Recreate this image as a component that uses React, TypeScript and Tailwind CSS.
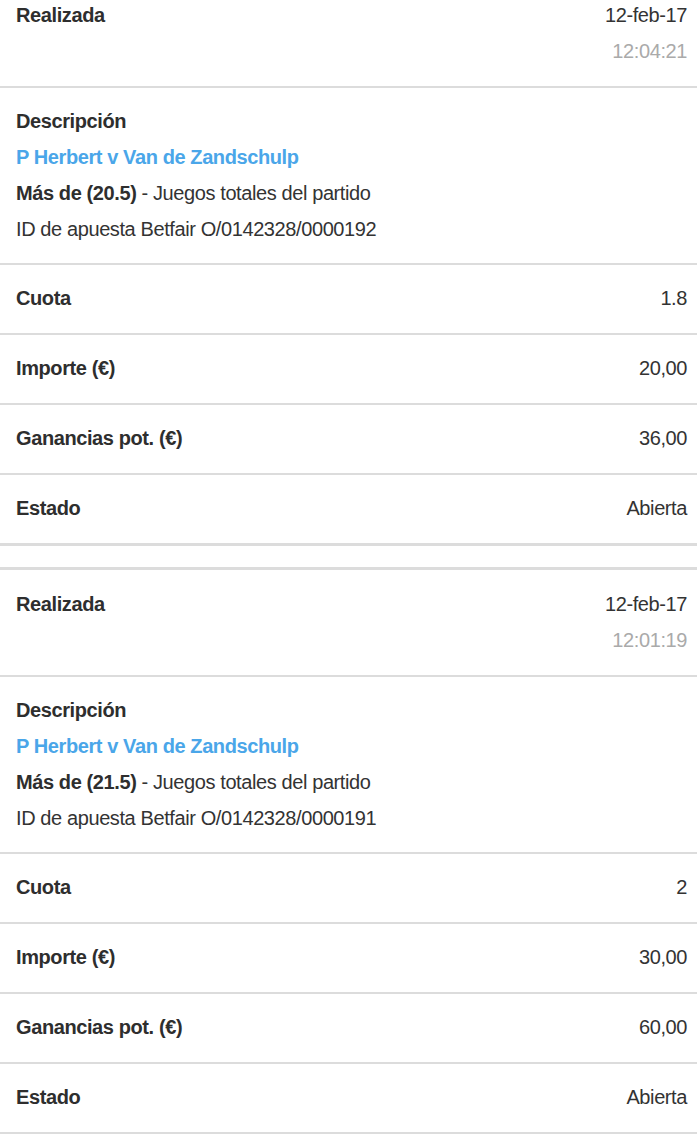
import React from "react";

type Bet = {
  date: string;
  time: string;
  over: string;
  id: string;
  cuota: string;
  importe: string;
  ganancias: string;
  estado: string;
};

const bets: Bet[] = [
  {
    date: "12-feb-17",
    time: "12:04:21",
    over: "Más de (20.5)",
    id: "O/0142328/0000192",
    cuota: "1.8",
    importe: "20,00",
    ganancias: "36,00",
    estado: "Abierta",
  },
  {
    date: "12-feb-17",
    time: "12:01:19",
    over: "Más de (21.5)",
    id: "O/0142328/0000191",
    cuota: "2",
    importe: "30,00",
    ganancias: "60,00",
    estado: "Abierta",
  },
];

function Row({ label, value }: { label: string; value: string }) {
  return (
    <div className="flex h-[70px] items-center justify-between border-b-2 border-[#dcdcdc] pb-[2px] pl-4 pr-[10px]">
      <span className="font-bold text-[#2e2e2e]">{label}</span>
      <span className="text-[#333]">{value}</span>
    </div>
  );
}

function Card({ bet }: { bet: Bet }) {
  return (
    <div className="border-y-[3px] border-[#dcdcdc] bg-white">
      <div className="flex justify-between border-b-2 border-[#dcdcdc] pb-[17px] pl-4 pr-[10px] pt-4">
        <span className="h-9 leading-9 font-bold text-[#2e2e2e]">Realizada</span>
        <div className="flex flex-col items-end">
          <span className="h-9 leading-9 text-[#333]">{bet.date}</span>
          <span className="h-9 leading-9 text-[#aaa]">{bet.time}</span>
        </div>
      </div>
      <div className="flex flex-col border-b-2 border-[#dcdcdc] pb-4 pl-4 pr-[10px] pt-[15px] leading-9">
        <span className="font-bold text-[#2e2e2e]">Descripción</span>
        <span className="font-bold text-[#4aa6e9]">P Herbert v Van de Zandschulp</span>
        <span className="text-[#333]">
          <span className="font-bold text-[#2e2e2e]">{bet.over}</span> - Juegos totales del partido
        </span>
        <span className="text-[#333]">ID de apuesta Betfair {bet.id}</span>
      </div>
      <Row label="Cuota" value={bet.cuota} />
      <Row label="Importe (€)" value={bet.importe} />
      <Row label="Ganancias pot. (€)" value={bet.ganancias} />
      <div className="flex h-[68px] items-center justify-between pb-[2px] pl-4 pr-[10px]">
        <span className="font-bold text-[#2e2e2e]">Estado</span>
        <span className="text-[#333]">{bet.estado}</span>
      </div>
    </div>
  );
}

export default function App() {
  return (
    <div
      className="h-[1134px] w-[697px] overflow-hidden bg-white text-[20px] tracking-[-0.4px]"
      style={{ fontFamily: '"Liberation Sans", Arial, sans-serif' }}
    >
      <div className="-mt-[22px] flex flex-col gap-[21px]">
        {bets.map((b, i) => (
          <Card key={i} bet={b} />
        ))}
      </div>
    </div>
  );
}
